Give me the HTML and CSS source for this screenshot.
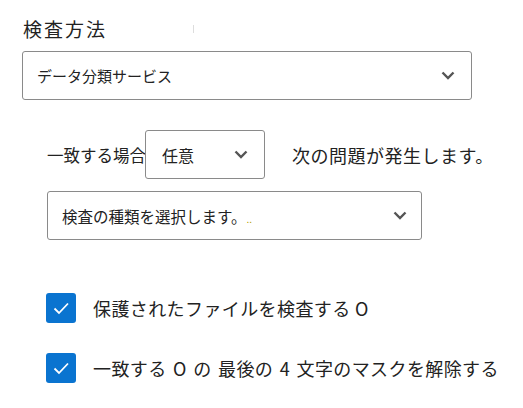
FILE: index.html
```html
<!DOCTYPE html>
<html lang="ja">
<head>
<meta charset="utf-8">
<link rel="stylesheet" href="styles.css">
</head>
<body>
<div class="page">
  <div class="label">検査方法<span class="tick"></span></div>
  <div class="select wide">
    <span class="value">データ分類サービス</span>
    <svg class="chev" viewBox="0 0 14 9" width="14" height="9"><path d="M1.5 1.5 L7 7 L12.5 1.5" fill="none" stroke="#555" stroke-width="2.4"/></svg>
  </div>
  <div class="rule">
    <div class="row">
      <span class="text">一致する場合</span>
      <div class="select small">
        <span class="value">任意</span>
        <svg class="chev" viewBox="0 0 14 9" width="14" height="9"><path d="M1.5 1.5 L7 7 L12.5 1.5" fill="none" stroke="#555" stroke-width="2.4"/></svg>
      </div>
      <span class="text after">次の問題が発生します。</span>
    </div>
    <div class="select mid">
      <span class="value">検査の種類を選択します。<span class="dots">..</span></span>
      <svg class="chev" viewBox="0 0 14 9" width="14" height="9"><path d="M1.5 1.5 L7 7 L12.5 1.5" fill="none" stroke="#555" stroke-width="2.4"/></svg>
    </div>
  </div>
  <div class="checks">
    <div class="check">
      <span class="box"><svg viewBox="0 0 30 30" width="30" height="30"><path d="M8.5 15.5 L13 20 L22 10.5" fill="none" stroke="#fff" stroke-width="1.8"/></svg></span>
      <span class="ctext">保護されたファイルを検査する O</span>
    </div>
    <div class="check">
      <span class="box"><svg viewBox="0 0 30 30" width="30" height="30"><path d="M8.5 15.5 L13 20 L22 10.5" fill="none" stroke="#fff" stroke-width="1.8"/></svg></span>
      <span class="ctext wide2">一致する O の 最後の 4 文字のマスクを解除する</span>
    </div>
  </div>
</div>
</body>
</html>
```
FILE: styles.css
```css
* { box-sizing: border-box; }
html, body { margin: 0; padding: 0; background: #fff; }
body {
  font-family: "Noto Sans CJK JP", "Noto Sans", sans-serif;
  font-weight: 400;
  color: #222;
  width: 523px;
  height: 408px;
  overflow: hidden;
}
.page {
  padding: 17px 0 0 22px;
  display: flex;
  flex-direction: column;
}
.label {
  font-size: 19px;
  line-height: 24px;
  letter-spacing: 2px;
  padding-left: 1px;
  display: flex;
  align-items: center;
}
.tick {
  width: 1px;
  height: 8px;
  background: #ddd;
  margin-left: 86px;
}
.select {
  border: 1px solid #8a8a8a;
  border-radius: 3px;
  height: 49px;
  display: flex;
  align-items: center;
  justify-content: space-between;
  background: #fff;
}
.select .value { font-size: 15px; }
.select.wide {
  margin-top: 10px;
  width: 450px;
  padding: 0 16px 0 14px;
}
.rule {
  padding-left: 25px;
  margin-top: 30px;
  display: flex;
  flex-direction: column;
  gap: 12px;
}
.row {
  display: flex;
  align-items: center;
  height: 49px;
}
.text { font-size: 16.5px; }
.after { margin-left: 27px; letter-spacing: 0.5px; font-size: 18px; }
.select.small {
  width: 120px;
  padding: 0 16px 0 16px;
  margin-left: -1px;
}
.select.small .value { font-size: 16px; }
.select.mid {
  width: 375px;
  padding: 0 14px 0 14px;
}
.select.mid .value { font-size: 15.5px; }
.dots { color: #b5a000; font-size: 10px; }
.checks {
  margin-top: 53px;
  padding-left: 24px;
  display: flex;
  flex-direction: column;
  gap: 30px;
}
.check {
  display: flex;
  align-items: center;
  height: 30px;
}
.box {
  width: 30px;
  height: 30px;
  background: #0a74d0;
  border-radius: 3px;
  display: flex;
}
.ctext {
  margin-left: 17px;
  font-size: 18px;
  letter-spacing: 0.4px;
}
.wide2 { word-spacing: 2px; }
```
